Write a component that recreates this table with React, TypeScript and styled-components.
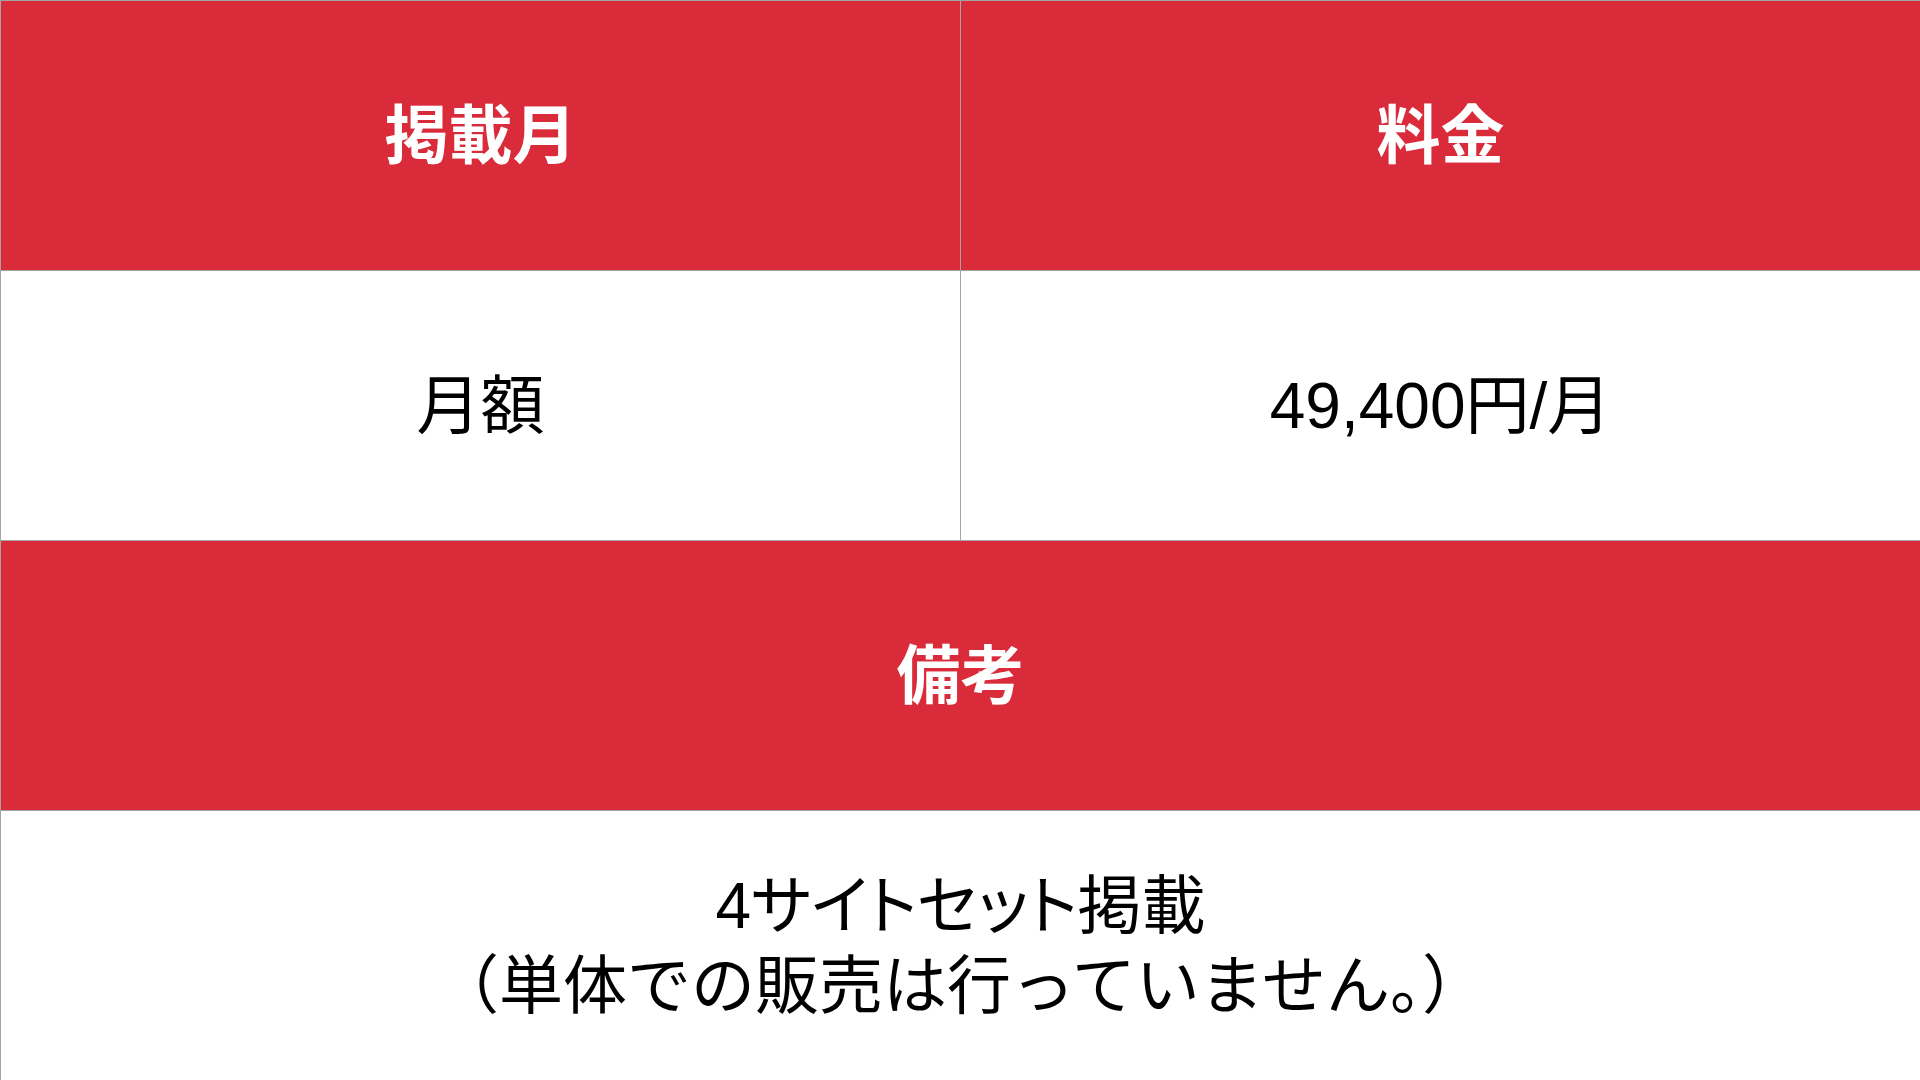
import React from 'react';
import styled, { createGlobalStyle } from 'styled-components';

const GlobalStyle = createGlobalStyle`
    html, body {
        margin: 0;
        padding: 0;
        background: #ffffff;
    }
    body {
        font-family: "Liberation Sans", "Noto Sans CJK JP", sans-serif;
        overflow: hidden;
    }
`;

type Line = {
    text: string;
    compact?: boolean;
};

type Row = {
    id: string;
    head?: boolean;
    cells: Line[][];
};

const rows: Row[] = [
    { id: 'head1', head: true, cells: [[{ text: '掲載月' }], [{ text: '料金' }]] },
    { id: 'body1', cells: [[{ text: '月額' }], [{ text: '49,400円/月' }]] },
    { id: 'head2', head: true, cells: [[{ text: '備考' }]] },
    {
        id: 'body2',
        cells: [[
            { text: '4サイトセット掲載', compact: true },
            { text: '（単体での販売は行っていません。）' },
        ]],
    },
];

const Table = styled.div`
    display: grid;
    grid-template-columns: 960px 960px;
    grid-auto-rows: 270px;
    width: 1920px;
    height: 1080px;
`;

const Cell = styled.div<{ $head?: boolean; $span?: boolean }>`
    grid-column: ${(p) => (p.$span ? '1 / span 2' : 'auto')};
    display: flex;
    flex-direction: column;
    align-items: center;
    justify-content: center;
    box-sizing: border-box;
    border-top: 1px solid #a4a4a4;
    border-left: 1px solid #a4a4a4;
    background: ${(p) => (p.$head ? '#d92b3a' : '#ffffff')};
    color: ${(p) => (p.$head ? '#ffffff' : '#000000')};
    font-size: 64px;
    font-weight: ${(p) => (p.$head ? 700 : 400)};
    line-height: 80px;
    text-align: center;
`;

const Text = styled.span<{ $compact?: boolean }>`
    display: block;
    white-space: nowrap;
    font-feature-settings: ${(p) => (p.$compact ? '"palt" 1' : 'normal')};
`;

const App: React.FC = () => {
    return (
        <>
            <GlobalStyle />
            <Table>
                {rows.map((row) =>
                    row.cells.map((lines, i) => (
                        <Cell key={row.id + i} $head={row.head} $span={row.cells.length === 1}>
                            {lines.map((line) => (
                                <Text key={line.text} $compact={line.compact}>{line.text}</Text>
                            ))}
                        </Cell>
                    ))
                )}
            </Table>
        </>
    );
};

export default App;
